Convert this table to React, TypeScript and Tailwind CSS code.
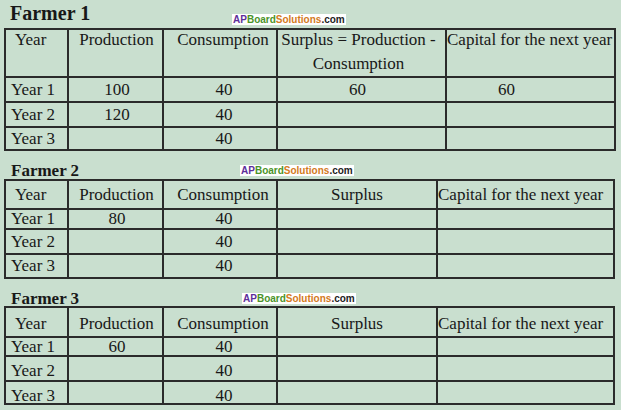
import type { ReactNode } from 'react';

interface Farmer {
  title: string;
  titleClass: string;
  rowClass: string;
  cols: string;
  rowsTpl: string;
  tallHeader: boolean;
  headPad: string;
  rowPad: string[];
  data: string[][];
}

const farmers: Farmer[] = [
  {
    title: 'Farmer 1',
    titleClass: 'w-[232px] pl-[10px] pt-[3px] text-[20px]',
    rowClass: 'h-[28px]',
    cols: 'grid-cols-[63px_95px_114px_169px_169px]',
    rowsTpl: 'grid-rows-[48px_25px_25px_23px]',
    tallHeader: true,
    headPad: '',
    rowPad: ['', '', ''],
    data: [
      ['Year 1', '100', '40', '60', '60'],
      ['Year 2', '120', '40', '', ''],
      ['Year 3', '', '40', '', ''],
    ],
  },
  {
    title: 'Farmer 2',
    titleClass: 'w-[240px] pl-[11px] pt-[11px] text-[17px]',
    rowClass: 'h-[28px]',
    cols: 'grid-cols-[63px_95px_114px_160px_177px]',
    rowsTpl: 'grid-rows-[29px_20px_25px_24px]',
    tallHeader: false,
    headPad: '',
    rowPad: ['pb-[2px]', '', 'pb-[2px]'],
    data: [
      ['Year 1', '80', '40', '', ''],
      ['Year 2', '', '40', '', ''],
      ['Year 3', '', '40', '', ''],
    ],
  },
  {
    title: 'Farmer 3',
    titleClass: 'w-[242px] pl-[11px] pt-[11px] text-[17px]',
    rowClass: 'h-[27px]',
    cols: 'grid-cols-[63px_95px_114px_160px_177px]',
    rowsTpl: 'grid-rows-[30px_19px_25px_23px]',
    tallHeader: false,
    headPad: 'pt-[3px]',
    rowPad: ['', 'pt-[4px]', 'pt-[6px]'],
    data: [
      ['Year 1', '60', '40', '', ''],
      ['Year 2', '', '40', '', ''],
      ['Year 3', '', '40', '', ''],
    ],
  },
];

function Watermark() {
  return (
    <div className="mt-[14px] flex h-[11px] items-center bg-white px-[1px] font-['Liberation_Sans',Arial,sans-serif] text-[10px] leading-none font-bold">
      <span className="text-[#5e2f9a]">AP</span>
      <span className="text-[#4a9428]">Board</span>
      <span className="text-[#d47a1c]">Solutions</span>
      <span className="text-[#222]">.com</span>
    </div>
  );
}

function Cell({ children, className }: { children?: ReactNode; className: string }) {
  return (
    <div className={`flex border-r-2 border-b-2 border-[#2b2b2b] whitespace-nowrap ${className}`}>
      {children}
    </div>
  );
}

function FarmerTable({ f }: { f: Farmer }) {
  const head = f.tallHeader
    ? 'items-start leading-[24px]'
    : `items-center leading-none ${f.headPad}`;
  const lift = f.tallHeader ? '-mt-[2px]' : '';
  return (
    <div
      className={`ml-[4px] grid w-fit border-t-2 border-l-2 border-[#2b2b2b] text-[17px] ${f.cols} ${f.rowsTpl}`}
    >
      {/* header */}
      <Cell className={`${head} pl-[9px]`}>
        <span className={lift}>Year</span>
      </Cell>
      <Cell className={`${head} justify-center pl-[2px]`}>
        <span className={lift}>Production</span>
      </Cell>
      <Cell className={`${head} justify-center pl-[6px]`}>
        <span className={lift}>Consumption</span>
      </Cell>
      <Cell className={`${head} justify-center text-center`}>
        {f.tallHeader ? (
          <span className="-mt-[2px] pr-[6px]">
            Surplus = Production -<br />
            Consumption
          </span>
        ) : (
          <span>Surplus</span>
        )}
      </Cell>
      <Cell className={`${head} justify-start pl-0`}>
        <span className={lift}>Capital for the next year</span>
      </Cell>

      {/* rows */}
      {f.data.map((row, i) => {
        const pad = f.rowPad[i];
        return (
          <div key={i} className="contents">
            <Cell className={`items-center pl-[5px] leading-none ${pad}`}>{row[0]}</Cell>
            <Cell className={`items-center justify-center pl-[3px] leading-none ${pad}`}>{row[1]}</Cell>
            <Cell className={`items-center justify-center pl-[8px] leading-none ${pad}`}>{row[2]}</Cell>
            <Cell className={`items-center justify-center pr-[8px] leading-none ${pad}`}>{row[3]}</Cell>
            <Cell className={`items-center pl-[51px] leading-none ${pad}`}>{row[4]}</Cell>
          </div>
        );
      })}
    </div>
  );
}

export default function App() {
  return (
    <div className="h-[410px] w-[621px] overflow-hidden bg-[#c9dfcf] font-['Liberation_Serif','Times_New_Roman',serif] text-[#181818]">
      {farmers.map((f) => (
        <section key={f.title}>
          <div className={`flex ${f.rowClass}`}>
            <div className={`shrink-0 leading-none font-bold ${f.titleClass}`}>{f.title}</div>
            <Watermark />
          </div>
          <FarmerTable f={f} />
        </section>
      ))}
    </div>
  );
}
